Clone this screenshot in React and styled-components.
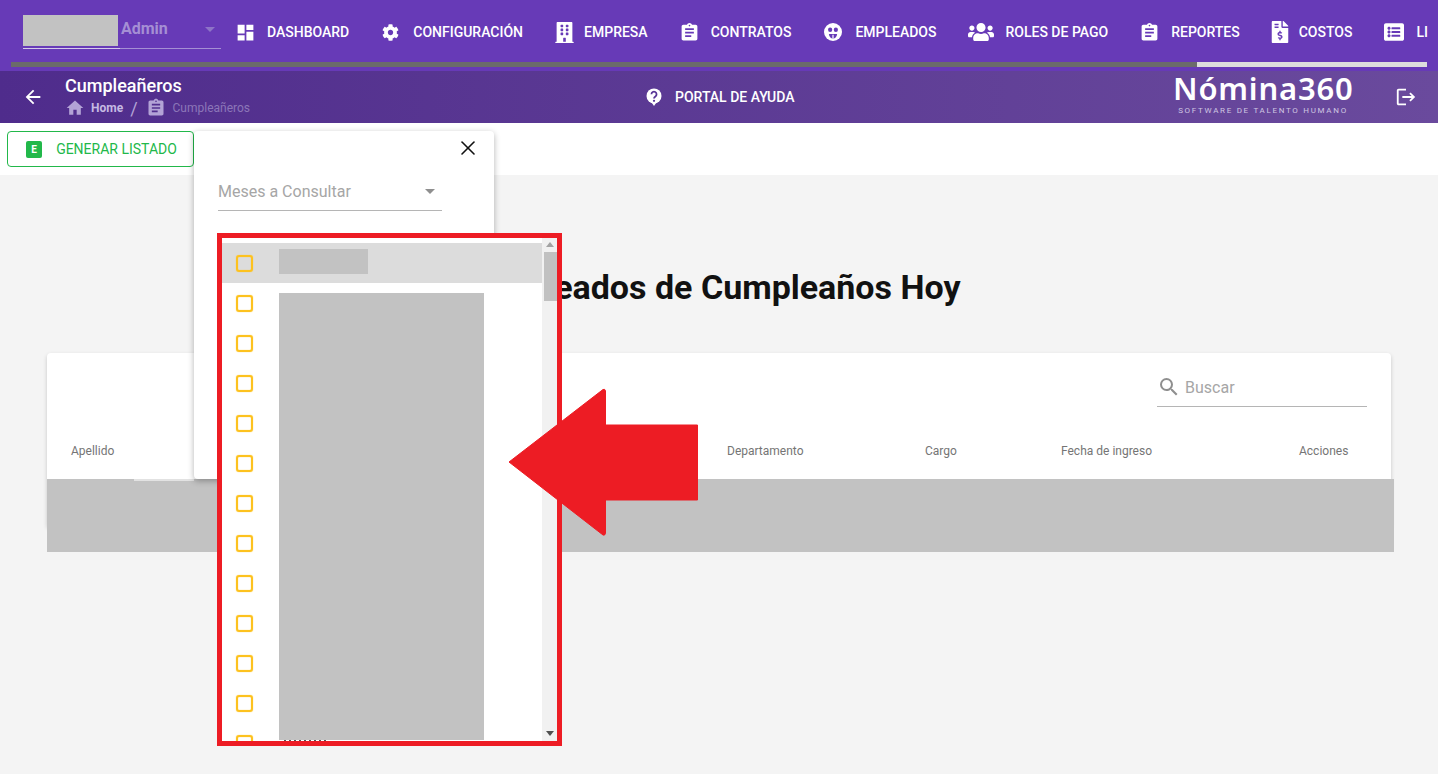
import React from 'react'
import styled, { createGlobalStyle } from 'styled-components'
import {
  MdDashboard, MdArrowBack, MdHome, MdSearch, MdArrowDropDown, MdLogout, MdAssignment,
} from 'react-icons/md'
import { FaBuilding, FaCog, FaUsers, FaFileInvoiceDollar, FaListAlt } from 'react-icons/fa'
import { X } from 'lucide-react'

const GlobalStyle = createGlobalStyle`
  html, body {
    margin: 0;
    height: 100%;
    overflow: hidden;
    background: #f4f4f4;
    font-family: Roboto, "Liberation Sans", sans-serif;
  }
`

const Page = styled.div`
  position: relative;
  width: 1438px;
  height: 774px;
  overflow: hidden;
`

const TopBar = styled.header`
  background: #673ab7;
  height: 71px;
  padding: 0 11px;
  box-sizing: border-box;
  overflow: hidden;
`

const NavRow = styled.div`
  display: flex;
  align-items: flex-start;
  height: 62px;
  padding: 15px 0 0 12px;
  box-sizing: border-box;
  white-space: nowrap;
`

const UserSelect = styled.div`
  width: 198px;
  height: 33px;
  flex: none;
  display: flex;
  align-items: flex-start;
  border-bottom: 1px solid;
  border-image: linear-gradient(90deg, #d5cbeb 49%, #a58fd4 49%) 1;
  position: relative;
  color: #a58fd4;
  font-size: 16px;
  font-weight: 700;
  line-height: 27px;
  svg {
    position: absolute;
    right: -1px;
    top: 2px;
    font-size: 24px;
    color: #8e74c7;
  }
`

const Redacted = styled.div`
  background: #c2c2c2;
  flex: none;
  width: ${(p) => p.$w}px;
  height: ${(p) => p.$h}px;
`

const UserName = styled.span`
  margin-left: 3px;
`

const Nav = styled.nav`
  display: flex;
  margin-left: 17px;
  gap: 32px;
`

const NavItem = styled.a`
  display: flex;
  align-items: center;
  height: 34px;
  color: #fff;
  font-size: 14px;
  font-weight: 500;
  text-transform: uppercase;
`

const IconSlot = styled.span`
  display: flex;
  align-items: center;
  width: ${(p) => p.$slot}px;
  flex: none;
  svg {
    flex: none;
    font-size: ${(p) => p.$icon}px;
    margin-left: ${(p) => p.$shift}px;
  }
`

const Progress = styled.div`
  height: 5px;
  background: #ddd;
`

const ProgressFill = styled.div`
  height: 100%;
  width: 1186px;
  background: #6b6b6b;
`

const SubBar = styled.div`
  height: 52px;
  background: linear-gradient(90deg, #4f2c8c 0%, #6a4a9d 100%);
  display: grid;
  grid-template-columns: 65px 580px 1fr 222px 43px;
  align-items: center;
  color: #fff;
`

const BackCell = styled.div`
  display: flex;
  justify-content: center;
  font-size: 22px;
`

const Crumbs = styled.div`
  display: flex;
  flex-direction: column;
  align-self: start;
`

const PageName = styled.div`
  font-size: 18px;
  font-weight: 500;
  line-height: 24px;
  margin-top: 3px;
`

const Trail = styled.div`
  display: flex;
  align-items: center;
  height: 20px;
  font-size: 12px;
  color: #b3a3d6;
  svg {
    font-size: 20px;
    flex: none;
  }
`

const TrailHome = styled.span`
  font-weight: 700;
  margin-left: 6px;
  color: #c6bae3;
`

const TrailSep = styled.span`
  font-size: 18px;
  margin: 0 8px 0 7px;
`

const TrailLast = styled.span`
  color: #8c76b8;
  margin-left: 7px;
`

const HelpLink = styled.a`
  display: flex;
  align-items: center;
  gap: 12px;
  font-size: 14px;
  font-weight: 500;
`

const Logo = styled.div`
  align-self: start;
  text-align: center;
  width: 180px;
`

const LogoName = styled.div`
  font-family: "Noto Sans", Roboto, sans-serif;
  font-size: 31px;
  font-weight: 600;
  line-height: 30px;
  letter-spacing: 0.8px;
  margin-top: 2px;
`

const LogoTag = styled.div`
  font-size: 8px;
  line-height: 9px;
  letter-spacing: 1.7px;
  white-space: nowrap;
  color: #cfc6e2;
  margin-top: 3px;
`

const ExitCell = styled.div`
  display: flex;
  font-size: 22px;
`

const ToolBar = styled.div`
  height: 52px;
  background: #fff;
  padding: 8px 7px;
  box-sizing: border-box;
`

const ExcelButton = styled.button`
  width: 187px;
  height: 36px;
  display: flex;
  align-items: center;
  justify-content: center;
  gap: 14px;
  padding: 0 0 0 2px;
  background: #fff;
  border: 1px solid #22b84a;
  border-radius: 4px;
  color: #22b84a;
  font: 400 14px Roboto, sans-serif;
`

const ExcelBadge = styled.span`
  width: 16px;
  height: 17px;
  border-radius: 2px;
  background: #22b84a;
  color: #fff;
  font-size: 10px;
  font-weight: 700;
  line-height: 17px;
  text-align: center;
`

const Title = styled.h1`
  margin: 90px 0 0;
  text-align: center;
  font-size: 34px;
  font-weight: 700;
  line-height: 44px;
  color: #111;
`

const TableCard = styled.section`
  position: relative;
  margin: 44px 47px 0;
  width: 1344px;
  height: 174px;
  background: #fff;
  border-radius: 4px;
  box-shadow: 0 2px 4px rgba(0, 0, 0, 0.18);
`

const SearchRow = styled.div`
  display: flex;
  justify-content: flex-end;
  padding: 21px 24px 0 0;
`

const SearchField = styled.div`
  width: 210px;
  height: 33px;
  display: flex;
  align-items: center;
  gap: 4px;
  padding-bottom: 6px;
  box-sizing: border-box;
  border-bottom: 1px solid #b5b5b5;
  font-size: 16px;
  color: #a6a6a6;
  svg {
    font-size: 24px;
    color: #8f8f8f;
  }
`

const HeadRow = styled.div`
  display: grid;
  grid-template-columns: 656px 198px 136px 238px 1fr;
  padding: 36px 0 0 24px;
  font-size: 12px;
  font-weight: 400;
  line-height: 16px;
  color: #757575;
`

const RedactedRow = styled.div`
  position: absolute;
  left: 0;
  top: 126px;
  width: 1347px;
  height: 73px;
  background: #c2c2c2;
`

const RowSliver = styled.div`
  position: absolute;
  left: 87px;
  top: 126px;
  width: 60px;
  height: 2px;
  background: #e2e2e2;
`

const Popover = styled.div`
  position: absolute;
  left: 194px;
  top: 131px;
  width: 300px;
  height: 348px;
  background: #fff;
  border-radius: 4px;
  box-shadow: 0 2px 6px rgba(0, 0, 0, 0.3);
  padding: 0 52px 0 24px;
  box-sizing: border-box;
`

const CloseButton = styled.div`
  position: absolute;
  right: 14px;
  top: 5px;
  color: #111;
  display: flex;
`

const MonthSelect = styled.div`
  margin-top: 45px;
  height: 35px;
  display: flex;
  align-items: center;
  justify-content: space-between;
  border-bottom: 1px solid #b5b5b5;
  font-size: 16px;
  color: #a6a6a6;
  padding-bottom: 4px;
  box-sizing: border-box;
  svg {
    font-size: 24px;
    color: #8f8f8f;
  }
`

const Frame = styled.div`
  position: absolute;
  left: 217px;
  top: 233px;
  width: 345px;
  height: 513px;
  box-sizing: border-box;
  border: 5px solid #ed1c24;
  background: #fff;
  display: flex;
  overflow: hidden;
`

const List = styled.div`
  flex: 1;
  position: relative;
  overflow: hidden;
  padding-top: 5px;
`

const Option = styled.div`
  height: 40px;
  display: flex;
  align-items: center;
  padding-left: 14px;
  background: ${(p) => (p.$active ? '#dcdcdc' : 'transparent')};
`

const Check = styled.span`
  width: 13px;
  height: 13px;
  border: 2px solid #fdc21f;
  border-radius: 3px;
  box-shadow: 0 0 1px #fdc21f, inset 0 0 1px #fdc21f;
  flex: none;
`

const FirstName = styled.div`
  margin: -3px 0 0 26px;
`

const NameBlock = styled.div`
  position: absolute;
  left: 57px;
  top: 55px;
  width: 205px;
  height: 447px;
  background: #c2c2c2;

  &::after {
    content: '';
    position: absolute;
    top: 100%;
    left: 5px;
    width: 45px;
    height: 1px;
    background: repeating-linear-gradient(90deg, #555 0 2px, transparent 2px 5px);
  }
`

const ScrollTrack = styled.div`
  width: 15px;
  background: #f1f1f1;
  position: relative;
  flex: none;
`

const ScrollThumb = styled.div`
  position: absolute;
  top: 14px;
  left: 2px;
  width: 13px;
  height: 49px;
  background: #c1c1c1;
`

const ScrollArrow = styled.span`
  position: absolute;
  left: 4px;
  ${(p) => (p.$down ? 'bottom: 5px;' : 'top: 4px;')}
  width: 0;
  height: 0;
  border-left: 4px solid transparent;
  border-right: 4px solid transparent;
  ${(p) => (p.$down ? 'border-top: 5px solid #505050;' : 'border-bottom: 5px solid #a3a3a3;')}
`

const Arrow = styled.svg`
  position: absolute;
  left: 507px;
  top: 387px;
`

const FaceIcon = () => (
  <svg width="1em" height="1em" viewBox="0 0 24 24">
    <circle cx="12" cy="12" r="12" fill="#fff" />
    <ellipse cx="8.2" cy="9" rx="2.8" ry="3" fill="#673ab7" />
    <ellipse cx="15.8" cy="9" rx="2.8" ry="3" fill="#673ab7" />
    <path d="M6.5 14.5H17.5C17.3 18 15 20.5 12 20.5C9 20.5 6.7 18 6.5 14.5Z" fill="#673ab7" />
    <path d="M11.2 15.5H12.8V20.5H11.2Z" fill="#fff" />
  </svg>
)

const HelpIcon = () => (
  <svg width="18" height="18" viewBox="0 0 24 24">
    <circle cx="12" cy="10.5" r="10" fill="#fff" />
    <path d="M8.5 19L12 24L15.5 19Z" fill="#fff" />
    <path d="M8.6 8.3a3.4 3.4 0 1 1 5.2 2.9c-1.2.8-1.8 1.4-1.8 2.8" fill="none" stroke="#583596" strokeWidth="2.4" />
    <circle cx="12" cy="17" r="1.5" fill="#583596" />
  </svg>
)

const navItems = [
  { label: 'Dashboard', icon: <MdDashboard />, size: 21, slot: 29, shift: -3 },
  { label: 'Configuración', icon: <FaCog />, size: 17, slot: 32, shift: 1 },
  { label: 'Empresa', icon: <FaBuilding />, size: 21, slot: 29, shift: -1 },
  { label: 'Contratos', icon: <MdAssignment />, size: 21, slot: 31, shift: -1 },
  { label: 'Empleados', icon: <FaceIcon />, size: 18, slot: 32, shift: 1 },
  { label: 'Roles de pago', icon: <FaUsers />, size: 26, slot: 37, shift: 0 },
  { label: 'Reportes', icon: <MdAssignment />, size: 21, slot: 31, shift: -1 },
  { label: 'Costos', icon: <FaFileInvoiceDollar />, size: 22, slot: 27, shift: -3 },
  { label: 'Li', icon: <FaListAlt />, size: 20, slot: 32, shift: 0 },
]

const columns = ['Apellido', 'Departamento', 'Cargo', 'Fecha de ingreso', 'Acciones']

export default function App() {
  return (
    <Page>
      <GlobalStyle />
      <TopBar>
        <NavRow>
          <UserSelect>
            <Redacted $w={95} $h={31} />
            <UserName>Admin</UserName>
            <MdArrowDropDown />
          </UserSelect>
          <Nav>
            {navItems.map((item) => (
              <NavItem key={item.label}>
                <IconSlot $slot={item.slot} $icon={item.size} $shift={item.shift}>
                  {item.icon}
                </IconSlot>
                {item.label}
              </NavItem>
            ))}
          </Nav>
        </NavRow>
        <Progress>
          <ProgressFill />
        </Progress>
      </TopBar>

      <SubBar>
        <BackCell>
          <MdArrowBack />
        </BackCell>
        <Crumbs>
          <PageName>Cumpleañeros</PageName>
          <Trail>
            <MdHome />
            <TrailHome>Home</TrailHome>
            <TrailSep>/</TrailSep>
            <MdAssignment />
            <TrailLast>Cumpleañeros</TrailLast>
          </Trail>
        </Crumbs>
        <HelpLink>
          <HelpIcon />
          PORTAL DE AYUDA
        </HelpLink>
        <Logo>
          <LogoName>Nómina360</LogoName>
          <LogoTag>SOFTWARE DE TALENTO HUMANO</LogoTag>
        </Logo>
        <ExitCell>
          <MdLogout />
        </ExitCell>
      </SubBar>

      <ToolBar>
        <ExcelButton>
          <ExcelBadge>E</ExcelBadge>
          GENERAR LISTADO
        </ExcelButton>
      </ToolBar>

      <Title>Empleados de Cumpleaños Hoy</Title>

      <TableCard>
        <SearchRow>
          <SearchField>
            <MdSearch />
            Buscar
          </SearchField>
        </SearchRow>
        <HeadRow>
          {columns.map((c) => (
            <span key={c}>{c}</span>
          ))}
        </HeadRow>
        <RedactedRow />
        <RowSliver />
      </TableCard>

      <Popover>
        <CloseButton>
          <X size={24} strokeWidth={1.6} />
        </CloseButton>
        <MonthSelect>
          Meses a Consultar
          <MdArrowDropDown />
        </MonthSelect>
      </Popover>

      <Frame>
        <List>
          {Array.from({ length: 13 }, (_, i) => (
            <Option key={i} $active={i === 0}>
              <Check />
              {i === 0 && (
                <FirstName>
                  <Redacted $w={89} $h={25} />
                </FirstName>
              )}
            </Option>
          ))}
          <NameBlock />
        </List>
        <ScrollTrack>
          <ScrollArrow />
          <ScrollThumb />
          <ScrollArrow $down />
        </ScrollTrack>
      </Frame>

      <Arrow width="192" height="150" viewBox="0 0 192 150">
        <path d="M2 75 L96 2.5 Q98 1.5 98.5 4 V38 H190.5 V113 H98.5 V146 Q98 149 96 148 Z" fill="#ed1c24" stroke="#ed1c24" strokeLinejoin="round" />
      </Arrow>
    </Page>
  )
}
